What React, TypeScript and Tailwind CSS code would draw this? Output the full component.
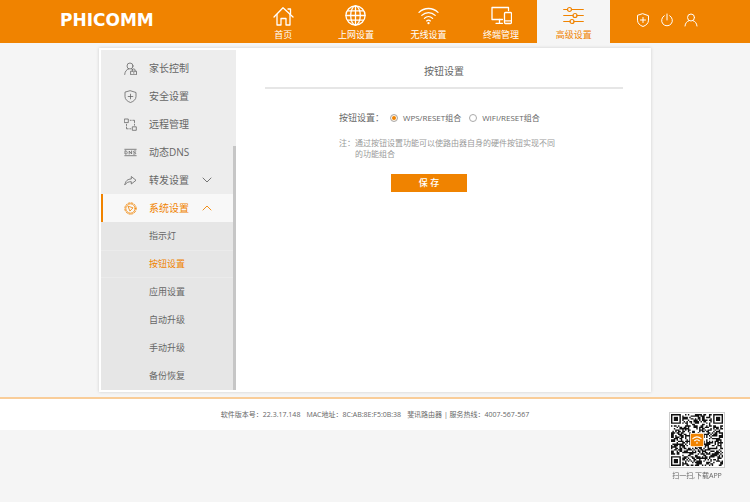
import { ReactNode } from "react";
import { twMerge } from "tailwind-merge";

interface IconProps {
  children: ReactNode;
  viewBox: string;
  className?: string;
}

function Icon({ children, viewBox, className }: IconProps) {
  return (
    <svg
      viewBox={viewBox}
      fill="none"
      stroke="currentColor"
      strokeLinecap="round"
      strokeLinejoin="round"
      aria-hidden="true"
      className={twMerge("shrink-0", className)}
    >
      {children}
    </svg>
  );
}

const navItems = [
  {
    label: "首页",
    icon: (
      <g strokeWidth="1.3">
        <path d="M1 12 10 2.8 20 12" />
        <path d="M4 9.500V20h4v-6.500h5V20h4V9.500" />
        <path d="M15 4h2.500v5" />
      </g>
    ),
  },
  {
    label: "上网设置",
    icon: (
      <g strokeWidth="1.3">
        <circle cx="10.500" cy="10.500" r="9.600" />
        <ellipse cx="10.500" cy="10.500" rx="4.800" ry="9.600" />
        <path d="M10.500 1v19M1 10.500h19M2.600 5.800h15.800M2.600 15.200h15.800" />
      </g>
    ),
  },
  {
    label: "无线设置",
    icon: (
      <g strokeWidth="1.300">
        <path d="M1 7.400c5.400-5.200 13.600-5.200 19 0" />
        <path d="M3.800 10.400c3.900-3.700 9.500-3.700 13.400 0" />
        <path d="M6.400 13.400c2.400-2.300 5.800-2.300 8.200 0" />
        <path d="M8.600 15.900c1.200-1 2.600-1 3.800 0" />
        <circle cx="10.500" cy="18.200" r=".5" fill="currentColor" />
      </g>
    ),
  },
  {
    label: "终端管理",
    icon: (
      <g strokeWidth="1.3">
        <path d="M11.500 14.500H1V2.500h16.500v3" />
        <path d="M8.500 14.500v3.500M5 18.300h6.500" />
        <rect x="13.500" y="7.500" width="7" height="11" rx="1" />
        <path d="M13.500 15.800h7" />
      </g>
    ),
  },
  {
    label: "高级设置",
    active: true,
    icon: (
      <g strokeWidth="1.2">
        <path d="M.7 4.500h3.800M8.500 4.500h11.800M.7 10.500h9.300M14 10.500h6.300M.7 16.500h6.300M11 16.500h9.300" />
        <circle cx="6.500" cy="4.500" r="2" />
        <circle cx="12" cy="10.500" r="2" />
        <circle cx="9" cy="16.500" r="2" />
      </g>
    ),
  },
];

const headerActions = [
  {
    label: "安全",
    icon: (
      <path d="M7 .8 12.500 2.700v4.500c0 3-2.300 5.200-5.500 6.300-3.200-1.100-5.500-3.300-5.500-6.300V2.700zM7 4.500v5M4.500 7h5" />
    ),
  },
  {
    label: "退出",
    icon: <path d="M7 1v6M4.300 2.700a5.400 5.400 0 1 0 5.400 0" />,
  },
  {
    label: "用户",
    icon: (
      <>
        <circle cx="7" cy="4.500" r="3.500" />
        <path d="M1 13c.3-3 2-4.800 4-5.300M13 13c-.3-3-2-4.800-4-5.300" />
      </>
    ),
  },
];

const menuItems = [
  {
    label: "家长控制",
    icon: (
      <>
        <circle cx="6" cy="4" r="3" />
        <path d="M.7 12.500c.2-3 1.700-5 4-5.600M7.500 7l1 .5" />
        <path d="M7 9.200h5.500v3.500H7zM8.300 9.200V8c0-1.500 2.800-1.500 2.800 0v1.200M9.800 10.500v.8" />
      </>
    ),
  },
  {
    label: "安全设置",
    icon: (
      <path d="M6.500.8 12 2.500v4c0 3-2.300 4.900-5.500 6-3.200-1.100-5.500-3-5.500-6v-4zM6.500 4.200v4.600M4.200 6.500h4.600" />
    ),
  },
  {
    label: "远程管理",
    icon: (
      <>
        <path d="M.7 1h3.600v3.600H.7zM8.700 8.800h3.600v3.500H8.700z" />
        <path d="M6.200 2.300h1M8.800 2.300h1.700v2.200M10.500 6.200v1M2.500 6.300v1.200M2.500 9v1.800h1.700M5.800 10.800h1" />
      </>
    ),
  },
  {
    label: "动态DNS",
    icon: (
      <>
        <path d="M.8 3.300h11.400M.8 9.700h11.400" />
        <path d="M1 5v3h1.200c1.400 0 1.400-3 0-3zM5.200 8V5l2.400 3V5M11.800 5h-1.600c-1 0-1 1.500 0 1.500h.8c1 0 1 1.500 0 1.500H9.500" />
      </>
    ),
  },
  {
    label: "转发设置",
    expandable: true,
    icon: <path d="M1 10.500c.3-3.700 2.800-5.500 6.300-5.500V2.500L12 6.300 7.300 10V7.700C4.500 7.600 2.500 8.500 1 10.500z" />,
  },
  {
    label: "系统设置",
    expandable: true,
    active: true,
    icon: (
      <>
        <circle cx="6.500" cy="6.500" r="4.700" />
        <circle cx="6.500" cy="6.500" r="5.700" strokeDasharray="1.500 1.500" />
        <path d="M4.300 4.300 9 5.800 6.200 8.800z" />
      </>
    ),
  },
];

const subItems = [
  { label: "指示灯" },
  { label: "按钮设置", active: true },
  { label: "应用设置" },
  { label: "自动升级" },
  { label: "手动升级" },
  { label: "备份恢复" },
];

function Header() {
  return (
    <header className="bg-[#f08300] text-white">
      <div className="mx-auto flex h-[43px] max-w-[750px] items-center pr-[52px] pl-[60px]">
        <a
          href="#"
          className="pb-[3px] font-['DejaVu_Sans',sans-serif] text-[17px] leading-5 font-bold"
        >
          PHICOMM
        </a>
        <nav className="mr-[26px] ml-auto flex h-full w-[363px]">
          {navItems.map((item) => (
            <a
              key={item.label}
              href="#"
              className={twMerge(
                "flex flex-1 flex-col items-center gap-[3px] pt-[5px] text-[9px] leading-3",
                item.active && "bg-[#f5f5f5] text-[#f08300]"
              )}
            >
              <Icon viewBox="0 0 21 21" className="size-[21px]">
                {item.icon}
              </Icon>
              {item.label}
            </a>
          ))}
        </nav>
        <div className="flex gap-[10px] pb-[3px]">
          {headerActions.map((action) => (
            <button key={action.label} type="button" aria-label={action.label}>
              <Icon viewBox="0 0 14 14" className="size-[14px]">
                {action.icon}
              </Icon>
            </button>
          ))}
        </div>
      </div>
    </header>
  );
}

function Sidebar() {
  return (
    <aside className="flex w-[135px] shrink-0 bg-[#ededed]">
      <div className="flex-1 pt-1">
        <ul className="text-[10px] leading-4 text-[#666]">
          {menuItems.map((item) => (
            <li key={item.label}>
              <a
                href="#"
                className={twMerge(
                  "flex h-7 items-center border-l-2 border-transparent pl-[21px]",
                  item.active && "border-[#f08300] bg-[#f8f8f8] text-[#f08300]"
                )}
              >
                <Icon
                  viewBox="0 0 13 13"
                  className="mr-3 size-[13px] stroke-[.8]"
                >
                  {item.icon}
                </Icon>
                <span className="w-[53px]">{item.label}</span>
                {item.expandable && (
                  <Icon
                    viewBox="0 0 10 6"
                    className="h-[6px] w-[10px] stroke-[.9]"
                  >
                    <path d={item.active ? "M1 5 5 1l4 4" : "m1 1 4 4 4-4"} />
                  </Icon>
                )}
              </a>
            </li>
          ))}
        </ul>
        <ul className="bg-[#e6e6e6] text-[9px] leading-4 text-[#666]">
          {subItems.map((item) => (
            <li key={item.label}>
              <a
                href="#"
                className={twMerge(
                  "flex h-7 items-center pl-12",
                  item.active && "border-y border-[#ebebeb] text-[#f08300]"
                )}
              >
                {item.label}
              </a>
            </li>
          ))}
        </ul>
      </div>
      {/* scroll track */}
      <div className="flex w-[3px] flex-col justify-end">
        <div className="h-[244px] bg-[#c6c6c6]" />
      </div>
    </aside>
  );
}

function RadioOption({ label, checked }: { label: string; checked?: boolean }) {
  return (
    <label className="flex items-center gap-[5px] text-[8px]">
      <input
        type="radio"
        name="button-mode"
        defaultChecked={checked}
        className="size-2 appearance-none rounded-full border border-[#aaa] bg-white bg-clip-padding checked:bg-[#f08300] checked:shadow-[inset_0_0_0_1px_#fff]"
      />
      {label}
    </label>
  );
}

function ButtonSettings() {
  return (
    <main className="flex-1 pt-[13px] pr-[26px] pl-[29px] text-[#666]">
      <h1 className="border-b-2 border-[#e6e6e6] pb-2 text-center text-[10px] leading-4">
        按钮设置
      </h1>
      <form className="pt-[21px] pl-[74px]">
        <div className="flex items-center text-[9px] leading-4">
          <span className="mr-[6px]">按钮设置：</span>
          <div className="flex gap-2">
            <RadioOption label="WPS/RESET组合" checked />
            <RadioOption label="WIFI/RESET组合" />
          </div>
        </div>
        <div className="mt-[11px] flex text-[8px] leading-[11px] text-[#999]">
          <span>注：</span>
          <p className="w-[204px]">
            通过按钮设置功能可以使路由器自身的硬件按钮实现不同的功能组合
          </p>
        </div>
        <button
          type="submit"
          className="mt-[15px] ml-[52px] h-[18px] w-[76px] bg-[#f08300] text-[9px] leading-[18px] font-medium text-white"
        >
          保 存
        </button>
      </form>
    </main>
  );
}

const QR_SIZE = 37;

function isFinder(x: number, y: number) {
  const near = (n: number) => n < 8;
  const far = (n: number) => n >= QR_SIZE - 8;
  return (near(x) && near(y)) || (far(x) && near(y)) || (near(x) && far(y));
}

function buildModules() {
  let seed = 29;
  let d = "";
  for (let y = 0; y < QR_SIZE; y++) {
    for (let x = 0; x < QR_SIZE; x++) {
      seed = (seed * 16807) % 2147483647;
      if (!isFinder(x, y) && seed % 100 < 52) d += `M${x} ${y}h1v1h-1z`;
    }
  }
  return d;
}

function QrCode() {
  return (
    <svg viewBox="0 0 37 37" className="size-[52px]" role="img" aria-label="APP">
      <path d={buildModules()} fill="#111" />
      {[
        [0, 0],
        [30, 0],
        [0, 30],
      ].map(([x, y]) => (
        <g key={`${x}-${y}`} transform={`translate(${x} ${y})`}>
          <path d="M.5.5h6v6h-6z" fill="none" stroke="#111" />
          <path d="M2 2h3v3H2z" fill="#111" />
        </g>
      ))}
      <rect x="13.500" y="13.500" width="10" height="10" rx="1" fill="#fff" />
      <rect x="14" y="14" width="9" height="9" rx=".8" fill="#f08300" />
      <g fill="none" stroke="#fff" strokeWidth=".8" strokeLinecap="round">
        <path d="M15.500 17.500c2-1.700 4-1.700 6 0M16.800 19c1.200-1 2.200-1 3.400 0" />
        <circle cx="18.500" cy="20.500" r=".2" />
      </g>
    </svg>
  );
}

function App() {
  return (
    <div className="min-h-screen bg-[#f5f5f5] font-['Open_Sans','Noto_Sans_CJK_SC',sans-serif]">
      <Header />
      <div className="mx-auto mt-[5px] flex max-w-[552px] bg-white p-[2px] shadow-[0_0_3px_#ccc]">
        <Sidebar />
        <ButtonSettings />
      </div>
      <footer className="mt-[5px] flex h-[33px] items-center justify-center gap-[6px] border-t-2 border-[#f9cd99] bg-white text-[7px] leading-4 text-[#666]">
        <span>软件版本号：22.3.17.148</span>
        <span>MAC地址：8C:AB:8E:F5:0B:38</span>
        <span>斐讯路由器 | 服务热线：4007-567-567</span>
      </footer>
      <div className="fixed right-[25px] bottom-5 flex flex-col items-center text-[7px] leading-3 text-[#666]">
        <div className="mb-[2px] border border-[#ccc] bg-white p-px">
          <QrCode />
        </div>
        扫一扫,下载APP
      </div>
    </div>
  );
}

export default App;
